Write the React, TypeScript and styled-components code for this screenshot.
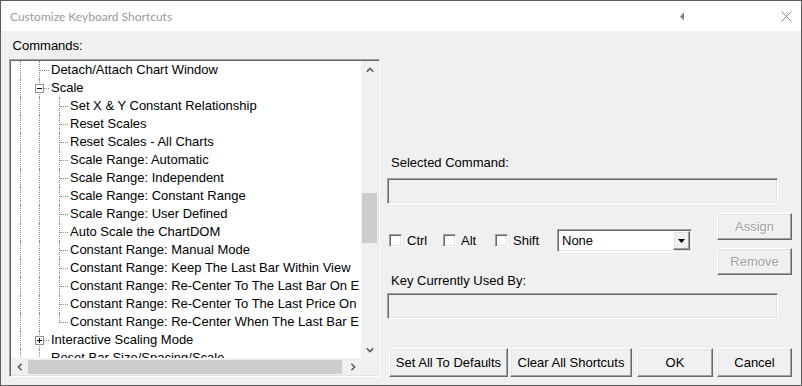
import React from 'react';
import styled, { createGlobalStyle, css } from 'styled-components';

type TreeRow = {
  label: string;
  level: 1 | 2;
  expander?: 'open' | 'closed';
  last?: boolean;
};

// labels as far as the tree shows them (the scrollbar cuts the long ones)
const rows: TreeRow[] = [
  { label: 'Detach/Attach Chart Window', level: 1 },
  { label: 'Scale', level: 1, expander: 'open' },
  { label: 'Set X & Y Constant Relationship', level: 2 },
  { label: 'Reset Scales', level: 2 },
  { label: 'Reset Scales - All Charts', level: 2 },
  { label: 'Scale Range: Automatic', level: 2 },
  { label: 'Scale Range: Independent', level: 2 },
  { label: 'Scale Range: Constant Range', level: 2 },
  { label: 'Scale Range: User Defined', level: 2 },
  { label: 'Auto Scale the ChartDOM', level: 2 },
  { label: 'Constant Range: Manual Mode', level: 2 },
  { label: 'Constant Range: Keep The Last Bar Within View', level: 2 },
  { label: 'Constant Range: Re-Center To The Last Bar On E', level: 2 },
  { label: 'Constant Range: Re-Center To The Last Price On', level: 2 },
  { label: 'Constant Range: Re-Center When The Last Bar E', level: 2, last: true },
  { label: 'Interactive Scaling Mode', level: 1, expander: 'closed' },
  { label: 'Reset Bar Size/Spacing/Scale', level: 1 },
];

const GlobalStyle = createGlobalStyle`
  html, body {
    margin: 0;
    padding: 0;
    background: #fff;
  }
  body {
    font-family: "Liberation Sans", Arial, sans-serif;
    font-size: 13px;
    color: #000;
  }
`;

const Window = styled.div`
  width: 802px;
  height: 386px;
  box-sizing: border-box;
  border: 1px solid #5c5c5c;
  display: flex;
  flex-direction: column;
  background: #f0f0f0;
  overflow: hidden;
`;

const TitleBar = styled.div`
  height: 30px;
  flex: none;
  background: #fff;
  display: flex;
  align-items: center;
  padding-left: 9px;
`;

const Title = styled.span`
  font-family: Lato, "Liberation Sans", sans-serif;
  font-size: 12px;
  color: #9a9a9a;
`;

const PinButton = styled.span`
  margin-left: auto;
  margin-right: 79px;
  width: 20px;
  height: 30px;
  display: flex;
  align-items: center;
  justify-content: center;
`;

const CloseButton = styled.span`
  width: 30px;
  height: 30px;
  display: flex;
  align-items: center;
  justify-content: center;
`;

const Body = styled.div`
  flex: 1;
  display: flex;
  padding: 7px 9px 8px 8px;
`;

const LeftColumn = styled.div`
  width: 371px;
  flex: none;
  display: flex;
  flex-direction: column;
`;

const Label = styled.div<{ $lh?: number; $indent?: number; $mt?: number }>`
  line-height: ${p => p.$lh ?? 15}px;
  height: ${p => p.$lh ?? 15}px;
  margin-top: ${p => p.$mt ?? 0}px;
  padding-left: ${p => p.$indent ?? 0}px;
  white-space: nowrap;
`;

const sunken = css`
  box-sizing: border-box;
  border: 1px solid;
  border-color: #a0a0a0 #fff #fff #a0a0a0;
  padding: 1px;
  box-shadow: inset 1px 1px #696969, inset -1px -1px #e3e3e3;
`;

const raised = css`
  box-sizing: border-box;
  border: 1px solid;
  border-color: #fff #696969 #696969 #fff;
  box-shadow: inset -1px -1px #a0a0a0, inset 1px 1px #e3e3e3;
  background: #f0f0f0;
`;

const Tree = styled.div`
  ${sunken};
  margin-top: 6px;
  height: 318px;
  display: grid;
  grid-template-columns: 1fr 17px;
  grid-template-rows: 1fr 17px;
`;

const TreeRows = styled.div`
  background: #fff;
  overflow: hidden;
`;

const Row = styled.div`
  height: 18px;
  display: flex;
  align-items: center;
  white-space: nowrap;
`;

const Guide = styled.span<{ $w: number; $v: 'full' | 'top'; $h?: boolean }>`
  position: relative;
  flex: none;
  width: ${p => p.$w}px;
  height: 18px;
  &::before {
    content: '';
    position: absolute;
    left: 9px;
    top: 0;
    height: ${p => (p.$v === 'full' ? '18px' : '10px')};
    border-left: 1px dotted #8e8e8e;
  }
  ${p =>
    p.$h &&
    css`
      &::after {
        content: '';
        position: absolute;
        left: 10px;
        right: 1px;
        top: 9px;
        border-top: 1px dotted #8e8e8e;
      }
    `}
`;

const ExpandBox = styled.span<{ $open: boolean }>`
  position: absolute;
  left: 5px;
  top: 5px;
  width: 9px;
  height: 9px;
  box-sizing: border-box;
  border: 1px solid #919191;
  background: #fff;
  z-index: 1;
  &::before {
    content: '';
    position: absolute;
    left: 1px;
    top: 3px;
    width: 5px;
    height: 1px;
    background: #000;
  }
  ${p =>
    !p.$open &&
    css`
      &::after {
        content: '';
        position: absolute;
        left: 3px;
        top: 1px;
        width: 1px;
        height: 5px;
        background: #000;
      }
    `}
`;

const RowLabel = styled.span`
  padding-left: 1px;
  line-height: 18px;
`;

const VScroll = styled.div`
  background: #f0f0f0;
  display: flex;
  flex-direction: column;
`;

const HScroll = styled.div`
  background: #f0f0f0;
  display: flex;
`;

const Corner = styled.div`
  background: #f0f0f0;
`;

const ArrowCell = styled.span`
  flex: none;
  width: 17px;
  height: 17px;
  display: flex;
  align-items: center;
  justify-content: center;
`;

const Track = styled.div<{ $vertical?: boolean }>`
  flex: 1;
  display: flex;
  flex-direction: ${p => (p.$vertical ? 'column' : 'row')};
`;

const Thumb = styled.div<{ $vertical?: boolean }>`
  background: #cdcdcd;
  ${p =>
    p.$vertical
      ? css`
          margin: 115px 1px 0 1px;
          height: 50px;
        `
      : css`
          margin: 2px 0 1px 0;
          width: 314px;
        `}
`;

const RightPanel = styled.div`
  flex: 1;
  margin-left: 7px;
  display: flex;
  flex-direction: column;
`;

const EditBox = styled.div<{ $mt: number }>`
  ${sunken};
  margin-top: ${p => p.$mt}px;
  width: 391px;
  height: 26px;
  background: #f0f0f0;
`;

const ControlRow = styled.div`
  margin-top: 9px;
  height: 61px;
  display: flex;
  align-items: flex-start;
`;

const CheckGroup = styled.div`
  margin-top: 16px;
  padding-left: 2px;
  height: 23px;
  display: flex;
  align-items: center;
`;

const CheckItem = styled.label<{ $w: number }>`
  width: ${p => p.$w}px;
  display: flex;
  align-items: center;
  gap: 5px;
`;

const CheckBox = styled.span`
  ${sunken};
  width: 13px;
  height: 13px;
  background: #fff;
`;

const Select = styled.div`
  ${sunken};
  width: 135px;
  height: 23px;
  background: #fff;
  display: flex;
  align-items: center;
`;

const SelectValue = styled.span`
  flex: 1;
  padding-left: 3px;
`;

const DropButton = styled.span`
  ${raised};
  width: 17px;
  height: 19px;
  display: flex;
  align-items: center;
  justify-content: center;
`;

const ButtonStack = styled.div`
  margin-left: auto;
  display: flex;
  flex-direction: column;
  gap: 8px;
`;

const Button = styled.button<{ $w: number; $h?: number; $ml?: number }>`
  ${raised};
  width: ${p => p.$w}px;
  height: ${p => p.$h ?? 29}px;
  margin-left: ${p => p.$ml ?? 0}px;
  padding: 0;
  font-family: "Liberation Sans", Arial, sans-serif;
  font-size: 13px;
  color: #000;
  &:disabled {
    color: #a0a0a0;
    text-shadow: 1px 1px #fff;
  }
`;

const BottomRow = styled.div`
  margin-top: 29px;
  padding-left: 2px;
  display: flex;
`;

const Chevron = ({ dir }: { dir: 'up' | 'down' | 'left' | 'right' }) => {
  const rot = { up: 0, right: 90, down: 180, left: 270 }[dir];
  return (
    <svg width="8" height="8" viewBox="0 0 8 8">
      <path
        d="M0.8 5.6 L4 2.4 L7.2 5.6"
        fill="none"
        stroke="#606060"
        strokeWidth="1.6"
        transform={`rotate(${rot} 4 4)`}
      />
    </svg>
  );
};

const TreeLine = ({ row }: { row: TreeRow }) => {
  const box = row.expander ? <ExpandBox $open={row.expander === 'open'} /> : null;
  if (row.level === 1) {
    return (
      <Row>
        <Guide $w={19} $v="full" />
        <Guide $w={20} $v="full" $h>
          {box}
        </Guide>
        <RowLabel>{row.label}</RowLabel>
      </Row>
    );
  }
  return (
    <Row>
      <Guide $w={19} $v="full" />
      <Guide $w={20} $v="full" />
      <Guide $w={19} $v={row.last ? 'top' : 'full'} $h />
      <RowLabel>{row.label}</RowLabel>
    </Row>
  );
};

export default function App() {
  return (
    <>
      <GlobalStyle />
      <Window>
        <TitleBar>
          <Title>Customize Keyboard Shortcuts</Title>
          <PinButton>
            <svg width="6" height="9" viewBox="0 0 6 9">
              <path d="M5 0.5 L1 4.5 L5 8.5 Z" fill="#808080" />
            </svg>
          </PinButton>
          <CloseButton>
            <svg width="11" height="11" viewBox="0 0 11 11">
              <path d="M0.5 0.5 L10.5 10.5 M10.5 0.5 L0.5 10.5" stroke="#8a8a8a" strokeWidth="1" />
            </svg>
          </CloseButton>
        </TitleBar>
        <Body>
          <LeftColumn>
            <Label>&nbsp;Commands:</Label>
            <Tree>
              <TreeRows>
                {rows.map((r, i) => (
                  <TreeLine key={i} row={r} />
                ))}
              </TreeRows>
              <VScroll>
                <ArrowCell>
                  <Chevron dir="up" />
                </ArrowCell>
                <Track $vertical>
                  <Thumb $vertical />
                </Track>
                <ArrowCell>
                  <Chevron dir="down" />
                </ArrowCell>
              </VScroll>
              <HScroll>
                <ArrowCell>
                  <Chevron dir="left" />
                </ArrowCell>
                <Track>
                  <Thumb />
                </Track>
                <ArrowCell>
                  <Chevron dir="right" />
                </ArrowCell>
              </HScroll>
              <Corner />
            </Tree>
          </LeftColumn>
          <RightPanel>
            <Label $indent={4} $mt={117}>Selected Command:</Label>
            <EditBox $mt={8} />
            <ControlRow>
              <CheckGroup>
                <CheckItem $w={54}>
                  <CheckBox />
                  Ctrl
                </CheckItem>
                <CheckItem $w={52}>
                  <CheckBox />
                  Alt
                </CheckItem>
                <CheckItem $w={62}>
                  <CheckBox />
                  Shift
                </CheckItem>
                <Select>
                  <SelectValue>None</SelectValue>
                  <DropButton>
                    <svg width="7" height="4" viewBox="0 0 7 4">
                      <path d="M0 0 L7 0 L3.5 4 Z" fill="#000" />
                    </svg>
                  </DropButton>
                </Select>
              </CheckGroup>
              <ButtonStack>
                <Button $w={75} $h={27} disabled>
                  Assign
                </Button>
                <Button $w={75} $h={27} disabled>
                  Remove
                </Button>
              </ButtonStack>
            </ControlRow>
            <Label $indent={4} $lh={13}>Key Currently Used By:</Label>
            <EditBox $mt={6} />
            <BottomRow>
              <Button $w={119}>Set All To Defaults</Button>
              <Button $w={122} $ml={2}>Clear All Shortcuts</Button>
              <Button $w={76} $ml={5}>OK</Button>
              <Button $w={75} $ml={4}>Cancel</Button>
            </BottomRow>
          </RightPanel>
        </Body>
      </Window>
    </>
  );
}
